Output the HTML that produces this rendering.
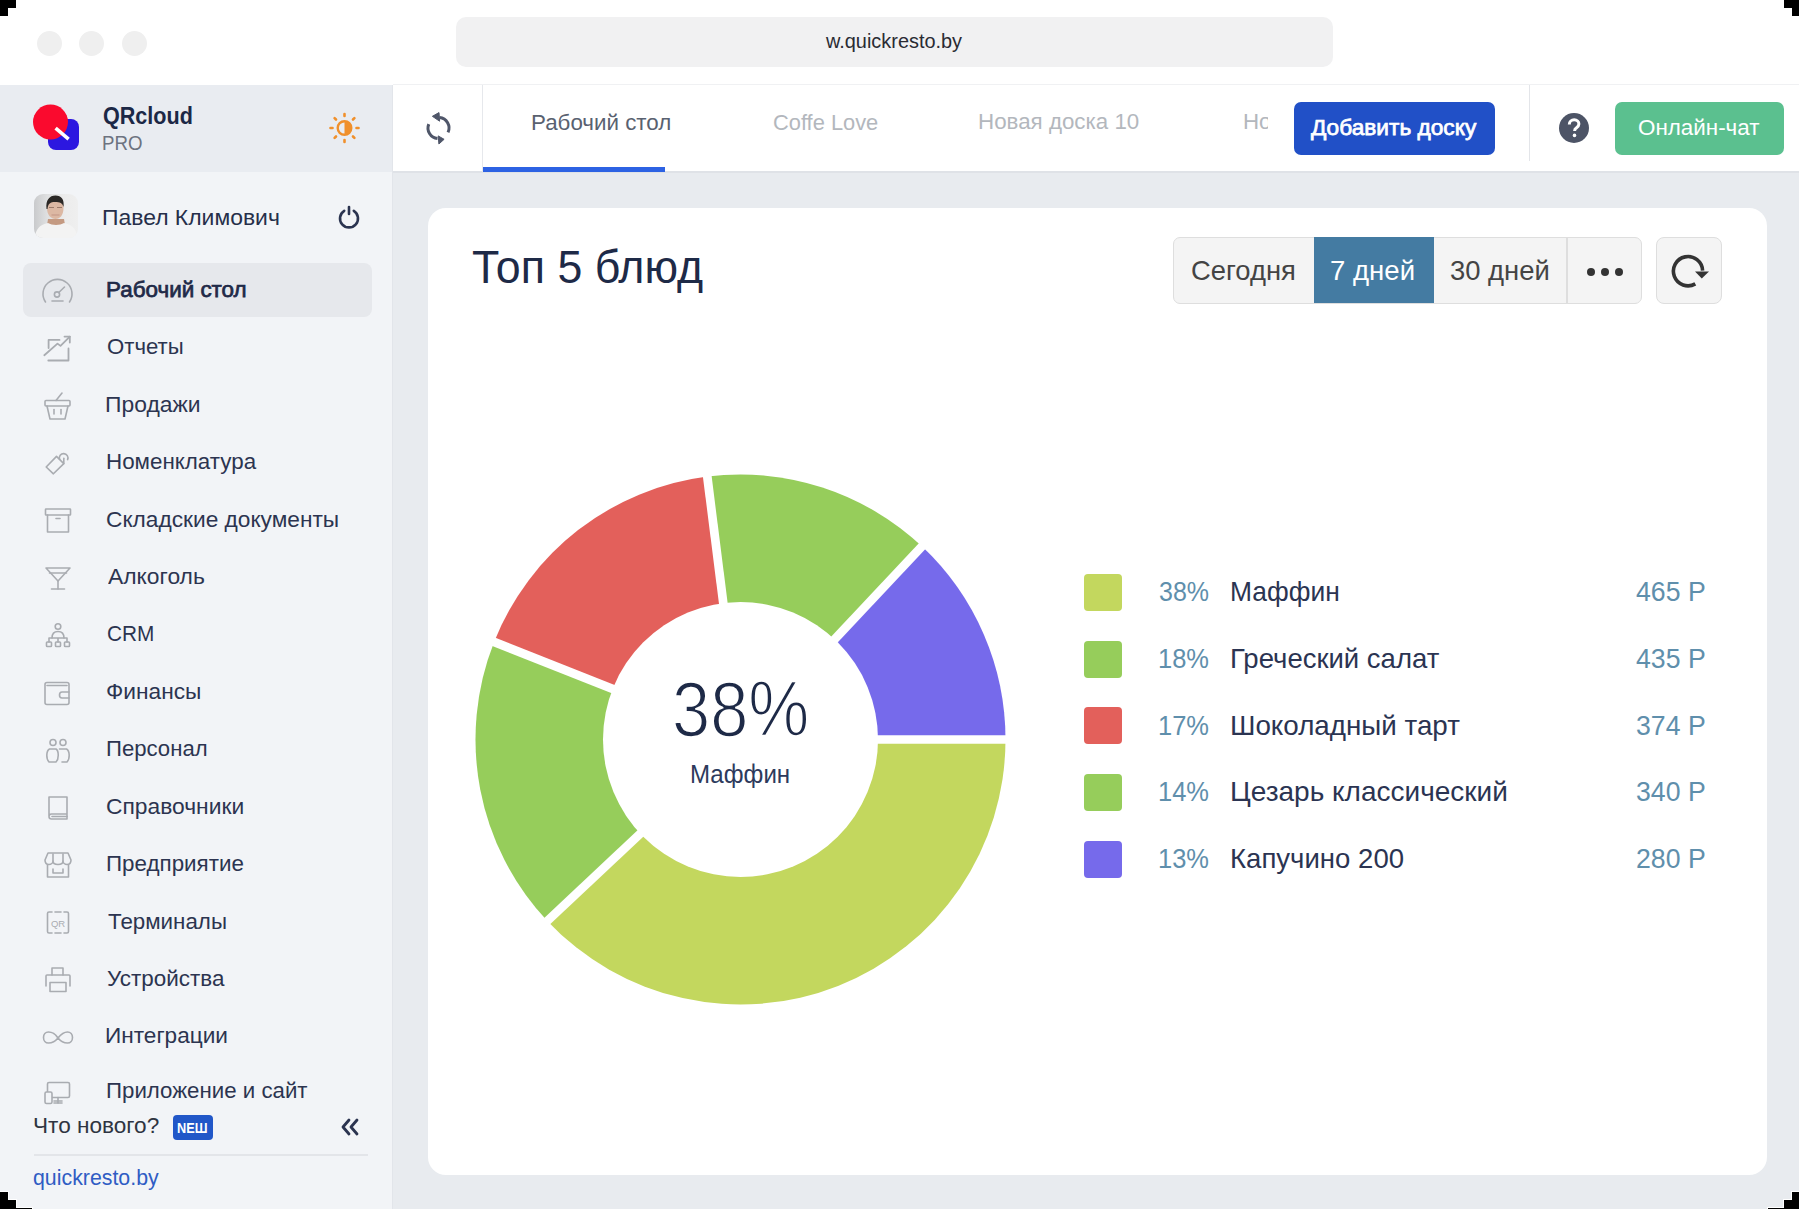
<!DOCTYPE html>
<html><head><meta charset="utf-8"><title>Quick Resto</title>
<style>
html,body{margin:0;padding:0;}
body{width:1799px;height:1209px;position:relative;overflow:hidden;background:#fff;font-family:"Liberation Sans",sans-serif;}
.r{position:absolute;}
.t{position:absolute;white-space:nowrap;line-height:1;transform-origin:0 0;}
</style></head><body>
<div class="r" style="left:36.5px;top:30.5px;width:25px;height:25px;border-radius:50%;background:#efefef"></div>
<div class="r" style="left:79.0px;top:30.5px;width:25px;height:25px;border-radius:50%;background:#efefef"></div>
<div class="r" style="left:121.5px;top:30.5px;width:25px;height:25px;border-radius:50%;background:#efefef"></div>
<div class="r" style="left:456px;top:17px;width:877px;height:50px;background:#f1f1f2;border-radius:10px;"></div>
<div class="r" style="left:0px;top:85px;width:392px;height:87px;background:#e9ecf1;border-radius:0px;"></div>
<div class="r" style="left:0px;top:172px;width:392px;height:1037px;background:#f2f4f7;border-radius:0px;"></div>
<div class="r" style="left:392px;top:85px;width:1px;height:1124px;background:#e2e5ea;border-radius:0px;"></div>
<svg class="r" style="left:30px;top:100px" width="54" height="54" viewBox="0 0 54 54">
<rect x="18" y="19" width="31" height="31" rx="8" fill="#2c17e0"/>
<circle cx="20.5" cy="22" r="17.5" fill="#fa0a2e"/>
<line x1="25.6" y1="28.2" x2="38.6" y2="39.2" stroke="#fff" stroke-width="3.6"/>
</svg>
<svg class="r" style="left:326px;top:110px" width="37" height="37" viewBox="0 0 37 37"><line x1="30.50" y1="18.00" x2="32.50" y2="18.00" stroke="#f0902c" stroke-width="2.6" stroke-linecap="round"/><line x1="26.99" y1="26.49" x2="28.40" y2="27.90" stroke="#f0902c" stroke-width="2.6" stroke-linecap="round"/><line x1="18.50" y1="30.00" x2="18.50" y2="32.00" stroke="#f0902c" stroke-width="2.6" stroke-linecap="round"/><line x1="10.01" y1="26.49" x2="8.60" y2="27.90" stroke="#f0902c" stroke-width="2.6" stroke-linecap="round"/><line x1="6.50" y1="18.00" x2="4.50" y2="18.00" stroke="#f0902c" stroke-width="2.6" stroke-linecap="round"/><line x1="10.01" y1="9.51" x2="8.60" y2="8.10" stroke="#f0902c" stroke-width="2.6" stroke-linecap="round"/><line x1="18.50" y1="6.00" x2="18.50" y2="4.00" stroke="#f0902c" stroke-width="2.6" stroke-linecap="round"/><line x1="26.99" y1="9.51" x2="28.40" y2="8.10" stroke="#f0902c" stroke-width="2.6" stroke-linecap="round"/><circle cx="18.5" cy="18" r="6.8" fill="none" stroke="#f0902c" stroke-width="2.4"/><path d="M18.5 11.2 A6.8 6.8 0 0 1 18.5 24.8 Z" fill="#f0902c"/></svg>
<div class="r" style="left:34px;top:194px;width:44px;height:44px;border-radius:9px;overflow:hidden;background:linear-gradient(90deg,#c9cacc 0%,#dfe0e1 30%,#ececec 70%,#efefef 100%)">
<svg width="44" height="44" viewBox="0 0 44 44" style="position:absolute;left:0;top:0">
<path d="M14 25 L30 25 L31 31 L13 31 Z" fill="#c49a82"/>
<path d="M13 14 C13 7 16.5 3.5 21.5 3.5 C26.5 3.5 29.5 7 29.5 14 C29.5 21 26 25 21.5 25 C17 25 13 21 13 14 Z" fill="#dcb8a3"/>
<path d="M12.5 15 C11.5 6 15.5 1.5 21.5 1.5 C27.5 1.5 30.5 5.5 29.5 13 C28.5 9 26 8 21 8 C16.5 8 14 9.5 13.5 15 Z" fill="#2b2826"/>
<path d="M15 13.5 L20 13.5 M23 13.5 L28 13.5" stroke="#9b7a6a" stroke-width="1"/>
<path d="M17.5 21 L25.5 21" stroke="#c29585" stroke-width="1"/>
<path d="M1 44 C1.5 35 6 30.5 14 29 C18 31.5 26 31.5 30 29 C38 30.5 43 35 43.5 44 Z" fill="#f3f3f3"/>
</svg></div>
<svg class="r" style="left:336px;top:204px" width="26" height="26" viewBox="0 0 26 26">
<path d="M8.2 6.8 A9 9 0 1 0 17.8 6.8" fill="none" stroke="#2b3450" stroke-width="2.6" stroke-linecap="round"/>
<line x1="13" y1="3" x2="13" y2="10" stroke="#2b3450" stroke-width="2.6" stroke-linecap="round"/></svg>
<div class="r" style="left:23px;top:263px;width:349px;height:54px;background:#e6e8ec;border-radius:8px;"></div>
<svg class="r" style="left:40px;top:276px" width="36" height="30" viewBox="0 0 36 30" fill="none" stroke="#a9acb1" stroke-width="1.6" stroke-linecap="round" stroke-linejoin="round"><path d="M5.5 26 A14.5 14.5 0 1 1 29.5 26"/><circle cx="17" cy="18.5" r="2.6"/><line x1="18.8" y1="16.5" x2="24.5" y2="11"/><line x1="12" y1="25" x2="23" y2="25"/></svg>
<svg class="r" style="left:40px;top:332px" width="36" height="34" viewBox="0 0 36 34" fill="none" stroke="#a9acb1" stroke-width="1.8" stroke-linecap="round" stroke-linejoin="round"><path d="M4.3 23.2 L17.5 11.6 L20.5 13.9 L29.8 4.6"/><path d="M24.5 4.6 L29.8 4.6 L29.8 10.6"/><path d="M8.6 16 L8.6 7.9 L19.5 7.9"/><path d="M8.3 28.5 L28.5 28.5 L28.5 16.5"/></svg>
<svg class="r" style="left:40px;top:388px" width="36" height="36" viewBox="0 0 36 36" fill="none" stroke="#a9acb1" stroke-width="1.6" stroke-linecap="round" stroke-linejoin="round"><line x1="16" y1="12.5" x2="22" y2="5"/><rect x="5" y="12.5" width="25" height="5.5" rx="1"/><path d="M7 18 L10 31 L25 31 L28 18"/><line x1="14" y1="21.5" x2="14" y2="26"/><line x1="21" y1="21.5" x2="21" y2="26"/></svg>
<svg class="r" style="left:40px;top:446px" width="36" height="36" viewBox="0 0 36 36" fill="none" stroke="#a9acb1" stroke-width="1.6" stroke-linecap="round" stroke-linejoin="round"><path d="M16.5 10.4 L23.8 17.6 L13.4 27.8 L6.2 21 Z"/><path d="M19.6 13.3 A4.3 4.3 0 1 1 27.6 13.6"/><path d="M23.8 12.2 L23.8 17.6"/></svg>
<svg class="r" style="left:40px;top:504px" width="36" height="36" viewBox="0 0 36 36" fill="none" stroke="#a9acb1" stroke-width="1.6" stroke-linecap="round" stroke-linejoin="round"><rect x="5.5" y="5" width="25" height="6" rx=".5"/><path d="M7.5 11 L7.5 28 L28.5 28 L28.5 11"/><line x1="16" y1="14.5" x2="20" y2="14.5"/></svg>
<svg class="r" style="left:40px;top:562px" width="36" height="36" viewBox="0 0 36 36" fill="none" stroke="#a9acb1" stroke-width="1.6" stroke-linecap="round" stroke-linejoin="round"><path d="M6 6 L30 6 L18 19 Z"/><line x1="9.5" y1="11" x2="26.5" y2="11"/><line x1="18" y1="19" x2="18" y2="27"/><line x1="11.5" y1="27" x2="24.5" y2="27"/></svg>
<svg class="r" style="left:40px;top:619px" width="36" height="36" viewBox="0 0 36 36" fill="none" stroke="#a9acb1" stroke-width="1.6" stroke-linecap="round" stroke-linejoin="round"><circle cx="18" cy="7.5" r="2.8"/><path d="M12 19 C12 14 14 12.5 18 12.5 C22 12.5 24 14 24 19"/><path d="M9 23 L9 19 L27 19 L27 23 M18 19 L18 23"/><rect x="6.5" y="23" width="5" height="4.5" rx=".8"/><rect x="15.5" y="23" width="5" height="4.5" rx=".8"/><rect x="24.5" y="23" width="5" height="4.5" rx=".8"/></svg>
<svg class="r" style="left:40px;top:676px" width="36" height="36" viewBox="0 0 36 36" fill="none" stroke="#a9acb1" stroke-width="1.6" stroke-linecap="round" stroke-linejoin="round"><rect x="5" y="6.5" width="24" height="22" rx="2"/><line x1="7" y1="9.5" x2="27" y2="9.5"/><path d="M29 16 L22 16 C20 16 19.5 17.5 19.5 19 C19.5 20.5 20 22 22 22 L29 22"/></svg>
<svg class="r" style="left:40px;top:734px" width="36" height="36" viewBox="0 0 36 36" fill="none" stroke="#a9acb1" stroke-width="1.6" stroke-linecap="round" stroke-linejoin="round"><circle cx="13" cy="8.5" r="3"/><circle cx="23" cy="8.5" r="3"/><path d="M9 28 C6 25 6 17 9.5 15 L16 15 C19 17 19 25 16 28 Z"/><path d="M19.5 15 L26.5 15 C30 17 30 25 27 28 L22 28"/></svg>
<svg class="r" style="left:40px;top:791px" width="36" height="36" viewBox="0 0 36 36" fill="none" stroke="#a9acb1" stroke-width="1.6" stroke-linecap="round" stroke-linejoin="round"><path d="M9 25 L9 6 L27 6 L27 28 L11.5 28 C10 28 9 27 9 25.5 C9 24 10 23 11.5 23 L27 23"/><line x1="12" y1="25.5" x2="27" y2="25.5"/></svg>
<svg class="r" style="left:40px;top:849px" width="36" height="36" viewBox="0 0 36 36" fill="none" stroke="#a9acb1" stroke-width="1.6" stroke-linecap="round" stroke-linejoin="round"><path d="M8 4 L28 4 L31 11 C31 14 29 15.5 27 15.5 C25 15.5 23 14 23 12 C23 14 21 15.5 18 15.5 C15 15.5 13 14 13 12 C13 14 11 15.5 9 15.5 C7 15.5 5 14 5 11 Z"/><line x1="13" y1="5" x2="13" y2="12"/><line x1="23" y1="5" x2="23" y2="12"/><path d="M7.5 16 L7.5 28 L28.5 28 L28.5 16"/><path d="M13 20 L13 24 L23 24 L23 20"/></svg>
<svg class="r" style="left:40px;top:906px" width="36" height="36" viewBox="0 0 36 36" fill="none" stroke="#a9acb1" stroke-width="1.6" stroke-linecap="round" stroke-linejoin="round"><path d="M12 6 L9 6 C8 6 7.5 6.5 7.5 7.5 L7.5 25.5 C7.5 26.5 8 27 9 27 L12 27"/><path d="M24 6 L27 6 C28 6 28.5 6.5 28.5 7.5 L28.5 25.5 C28.5 26.5 28 27 27 27 L24 27"/><line x1="15" y1="6" x2="21" y2="6"/><line x1="15" y1="27" x2="21" y2="27"/><text x="18" y="21" font-size="9.5" text-anchor="middle" fill="#a9acb1" stroke="none" font-family="Liberation Sans">QR</text></svg>
<svg class="r" style="left:40px;top:963px" width="36" height="36" viewBox="0 0 36 36" fill="none" stroke="#a9acb1" stroke-width="1.6" stroke-linecap="round" stroke-linejoin="round"><path d="M12 12 L12 5 L23 5 L23 12"/><path d="M6 23 L6 13 C6 12.5 6.5 12 7 12 L29 12 C29.5 12 30 12.5 30 13 L30 23"/><rect x="10" y="19.5" width="16" height="9"/></svg>
<svg class="r" style="left:40px;top:1020px" width="36" height="36" viewBox="0 0 36 36" fill="none" stroke="#a9acb1" stroke-width="1.6" stroke-linecap="round" stroke-linejoin="round"><path d="M18 18 C14 12 11 12 8.5 12 C5.5 12 3.5 14.5 3.5 17.5 C3.5 20.5 5.5 23 8.5 23 C11 23 14 23 18 18 C22 13 25 12 27.5 12 C30.5 12 32.5 14.5 32.5 17.5 C32.5 20.5 30.5 23 27.5 23 C25 23 22 23 18 18 Z"/></svg>
<svg class="r" style="left:40px;top:1076px" width="36" height="36" viewBox="0 0 36 36" fill="none" stroke="#a9acb1" stroke-width="1.6" stroke-linecap="round" stroke-linejoin="round"><rect x="7.5" y="6.5" width="22" height="15" rx="1.5"/><rect x="5" y="16" width="7" height="11.5" rx="1.5" fill="#f2f4f7"/><line x1="14" y1="25" x2="22" y2="25"/><line x1="18" y1="21.5" x2="18" y2="27"/><line x1="14" y1="27" x2="22" y2="27"/></svg>
<div class="r" style="left:172.5px;top:1115px;width:40.5px;height:24.5px;background:#2157c8;border-radius:4px;"></div>
<svg class="r" style="left:338px;top:1116px" width="24" height="22" viewBox="0 0 24 22" fill="none" stroke="#2b3450" stroke-width="2.8" stroke-linecap="round" stroke-linejoin="round">
<path d="M11 4 L5 11 L11 18"/><path d="M19 4 L13 11 L19 18"/></svg>
<div class="r" style="left:34px;top:1154px;width:334px;height:1.599999999999909px;background:#e3e5e9;border-radius:0px;"></div>
<div class="r" style="left:393px;top:85px;width:1406px;height:87px;background:#ffffff;border-radius:0px;"></div>
<div class="r" style="left:393px;top:84px;width:1406px;height:1px;background:#f0f1f3;border-radius:0px;"></div>
<div class="r" style="left:393px;top:171px;width:1406px;height:2px;background:#dfe2e7;border-radius:0px;"></div>
<div class="r" style="left:482px;top:85px;width:1px;height:87px;background:#e6e8ec;border-radius:0px;"></div>
<div class="r" style="left:483px;top:167px;width:182px;height:5px;background:#2d62e3;border-radius:0px;"></div>
<div class="r" style="left:1528.5px;top:85px;width:1.0px;height:76px;background:#e3e5e9;border-radius:0px;"></div>
<svg class="r" style="left:422px;top:110px" width="34" height="38" viewBox="0 0 34 38" fill="none" stroke="#4f5669" stroke-width="3" stroke-linecap="butt">
<path d="M26.02 22.44 A10.5 10.5 0 0 0 17.5 7.55"/><path d="M6.76 14.07 A10.5 10.5 0 0 0 15.5 28.45"/>
<path d="M10.4 6.3 L17 2.6 L17.6 11.2 Z" fill="#4f5669" stroke-width="1" stroke-linejoin="round"/>
<path d="M22.1 29.3 L16.2 25.9 L16.9 34 Z" fill="#4f5669" stroke-width="1" stroke-linejoin="round"/></svg>
<div class="r" style="left:1294px;top:101.5px;width:200.5px;height:53.5px;background:#2150c7;border-radius:7px;"></div>
<div class="r" style="left:1614.5px;top:101.5px;width:169.0px;height:53.5px;background:#5bc08f;border-radius:7px;"></div>
<svg class="r" style="left:1559px;top:113px" width="30" height="30" viewBox="0 0 30 30"><circle cx="15" cy="15" r="15" fill="#4d5466"/>
<path d="M10.3 11.5 C10.3 8.5 12.5 6.8 15.2 6.8 C18 6.8 19.9 8.6 19.9 11 C19.9 13.2 18.5 14.1 17.2 15 C16 15.8 15.6 16.4 15.6 18" fill="none" stroke="#fff" stroke-width="3"/><circle cx="15.5" cy="22.4" r="1.8" fill="#fff"/></svg>
<div class="r" style="left:393px;top:173px;width:1406px;height:1036px;background:#e8ebef;border-radius:0px;"></div>
<div class="r" style="left:427.5px;top:207.5px;width:1339.0px;height:967.0px;background:#ffffff;border-radius:18px;"></div>
<div class="r" style="left:1172.5px;top:237px;width:469.5px;height:66.5px;background:#f4f4f4;border-radius:7px;border:1.5px solid #dedede;box-sizing:border-box"></div>
<div class="r" style="left:1313.7px;top:236.7px;width:120.29999999999995px;height:66.80000000000001px;background:#447ba2;border-radius:0px;"></div>
<div class="r" style="left:1566.3px;top:238px;width:1.400000000000091px;height:64.5px;background:#dedede;border-radius:0px;"></div>
<div class="r" style="left:1586.9px;top:267.9px;width:8.2px;height:8.2px;border-radius:50%;background:#333"></div>
<div class="r" style="left:1600.9px;top:267.9px;width:8.2px;height:8.2px;border-radius:50%;background:#333"></div>
<div class="r" style="left:1614.9px;top:267.9px;width:8.2px;height:8.2px;border-radius:50%;background:#333"></div>
<div class="r" style="left:1656px;top:237px;width:66px;height:66.5px;background:#f4f4f4;border-radius:8px;border:1.5px solid #dedede;box-sizing:border-box"></div>
<svg class="r" style="left:1665px;top:247px" width="48" height="48" viewBox="0 0 48 48" fill="none">
<path d="M30.3 36.84 A14.6 14.6 0 1 1 37.6 23.6" stroke="#333" stroke-width="3.6" stroke-linecap="butt"/>
<path d="M30 24.4 L44 24.4 L36.8 31.4 Z" fill="#333"/></svg>
<svg class="r" style="left:0;top:0" width="1799" height="1209" viewBox="0 0 1799 1209"><path d="M740.5 739.5 L1005.50 739.50 A265 265 0 0 1 547.32 920.90 Z" fill="#c3d75e"/><path d="M740.5 739.5 L547.32 920.90 A265 265 0 0 1 494.11 641.95 Z" fill="#96cd5b"/><path d="M740.5 739.5 L494.11 641.95 A265 265 0 0 1 707.29 476.59 Z" fill="#e3605b"/><path d="M740.5 739.5 L707.29 476.59 A265 265 0 0 1 921.90 546.32 Z" fill="#96cd5b"/><path d="M740.5 739.5 L921.90 546.32 A265 265 0 0 1 1005.50 739.50 Z" fill="#766aeb"/><line x1="740.5" y1="739.5" x2="1010.50" y2="739.50" stroke="#fff" stroke-width="8.7"/><line x1="740.5" y1="739.5" x2="543.68" y2="924.33" stroke="#fff" stroke-width="8.7"/><line x1="740.5" y1="739.5" x2="489.46" y2="640.11" stroke="#fff" stroke-width="8.7"/><line x1="740.5" y1="739.5" x2="706.66" y2="471.63" stroke="#fff" stroke-width="8.7"/><line x1="740.5" y1="739.5" x2="925.33" y2="542.68" stroke="#fff" stroke-width="8.7"/><circle cx="740.5" cy="739.5" r="137.5" fill="#fff"/></svg>
<div class="r" style="left:1084.3px;top:574.0px;width:37.5px;height:37.0px;background:#c3d75e;border-radius:4px;"></div>
<div class="r" style="left:1084.3px;top:640.7px;width:37.5px;height:37.0px;background:#96cd5b;border-radius:4px;"></div>
<div class="r" style="left:1084.3px;top:707.4px;width:37.5px;height:37.0px;background:#e3605b;border-radius:4px;"></div>
<div class="r" style="left:1084.3px;top:774.1px;width:37.5px;height:37.0px;background:#96cd5b;border-radius:4px;"></div>
<div class="r" style="left:1084.3px;top:840.8px;width:37.5px;height:37.0px;background:#766aeb;border-radius:4px;"></div>
<div class="t" id="url" style="left:825.50px;top:31.00px;font-size:20px;font-weight:400;color:#2a2b33;transform:scaleX(0.9949);">w.quickresto.by</div>
<div class="t" id="qr" style="left:103.12px;top:103.97px;font-size:24.5px;font-weight:700;color:#1c2846;transform:scaleX(0.8800);">QRcloud</div>
<div class="t" id="pro" style="left:102.16px;top:132.55px;font-size:20.3px;font-weight:400;color:#6d7380;transform:scaleX(0.9195);">PRO</div>
<div class="t" id="user" style="left:101.92px;top:206.50px;font-size:22px;font-weight:400;color:#262f4a;transform:scaleX(1.0419);">Павел Климович</div>
<div class="t" id="m0" style="left:106.41px;top:278.88px;font-size:22.5px;font-weight:400;color:#1f2a48;transform:scaleX(0.9957);-webkit-text-stroke:.75px #1f2a48;">Рабочий стол</div>
<div class="t" id="m1" style="left:106.51px;top:336.31px;font-size:22.5px;font-weight:400;color:#2c3450;transform:scaleX(0.9853);">Отчеты</div>
<div class="t" id="m2" style="left:105.47px;top:393.74px;font-size:22.5px;font-weight:400;color:#2c3450;transform:scaleX(1.0165);">Продажи</div>
<div class="t" id="m3" style="left:105.51px;top:451.17px;font-size:22.5px;font-weight:400;color:#2c3450;transform:scaleX(0.9940);">Номенклатура</div>
<div class="t" id="m4" style="left:106.49px;top:508.59px;font-size:22.5px;font-weight:400;color:#2c3450;transform:scaleX(1.0087);">Складские документы</div>
<div class="t" id="m5" style="left:107.50px;top:566.02px;font-size:22.5px;font-weight:400;color:#2c3450;transform:scaleX(1.0160);">Алкоголь</div>
<div class="t" id="m6" style="left:106.58px;top:623.45px;font-size:22.5px;font-weight:400;color:#2c3450;transform:scaleX(0.9245);">CRM</div>
<div class="t" id="m7" style="left:106.49px;top:680.88px;font-size:22.5px;font-weight:400;color:#2c3450;transform:scaleX(1.0098);">Финансы</div>
<div class="t" id="m8" style="left:105.53px;top:738.31px;font-size:22.5px;font-weight:400;color:#2c3450;transform:scaleX(0.9840);">Персонал</div>
<div class="t" id="m9" style="left:106.49px;top:795.74px;font-size:22.5px;font-weight:400;color:#2c3450;transform:scaleX(1.0134);">Справочники</div>
<div class="t" id="m10" style="left:105.51px;top:853.17px;font-size:22.5px;font-weight:400;color:#2c3450;transform:scaleX(0.9941);">Предприятие</div>
<div class="t" id="m11" style="left:107.50px;top:910.61px;font-size:22.5px;font-weight:400;color:#2c3450;transform:scaleX(0.9932);">Терминалы</div>
<div class="t" id="m12" style="left:106.50px;top:968.03px;font-size:22.5px;font-weight:400;color:#2c3450;transform:scaleX(0.9974);">Устройства</div>
<div class="t" id="m13" style="left:105.49px;top:1025.46px;font-size:22.5px;font-weight:400;color:#2c3450;transform:scaleX(1.0042);">Интеграции</div>
<div class="t" id="m14" style="left:105.72px;top:1079.97px;font-size:22.5px;font-weight:400;color:#2c3450;transform:scaleX(0.9896);">Приложение и сайт</div>
<div class="t" id="whatsnew" style="left:33.15px;top:1115.10px;font-size:22px;font-weight:400;color:#2f3441;transform:scaleX(1.0267);">Что нового?</div>
<div class="t" id="new" style="left:177.22px;top:1121.47px;font-size:14.5px;font-weight:700;color:#ffffff;transform:scaleX(0.8788);">NEШ</div>
<div class="t" id="site" style="left:32.73px;top:1167.40px;font-size:22px;font-weight:400;color:#2f5cc4;transform:scaleX(0.9698);">quickresto.by</div>
<div class="t" id="tab0" style="left:531.21px;top:111.87px;font-size:22.5px;font-weight:400;color:#596170;transform:scaleX(0.9935);">Рабочий стол</div>
<div class="t" id="tab1" style="left:772.73px;top:111.67px;font-size:22.5px;font-weight:400;color:#b3b7bd;transform:scaleX(0.9710);">Coffe Love</div>
<div class="t" id="tab2" style="left:978.41px;top:111.37px;font-size:22.5px;font-weight:400;color:#b3b7bd;transform:scaleX(0.9925);">Новая доска 10</div>
<div class="t" id="btn1" style="left:1311.10px;top:117.27px;font-size:22.5px;font-weight:400;color:#ffffff;transform:scaleX(1.0079);-webkit-text-stroke:.75px #fff;">Добавить доску</div>
<div class="t" id="btn2" style="left:1637.60px;top:116.98px;font-size:22.5px;font-weight:400;color:#ffffff;transform:scaleX(0.9950);">Онлайн-чат</div>
<div class="t" id="title" style="left:471.52px;top:245.43px;font-size:45.5px;font-weight:400;color:#1e2a47;transform:scaleX(0.9837);">Топ 5 блюд</div>
<div class="t" id="seg0" style="left:1190.70px;top:256.62px;font-size:27.5px;font-weight:400;color:#444444;transform:scaleX(0.9951);">Сегодня</div>
<div class="t" id="seg1" style="left:1329.80px;top:256.62px;font-size:27.5px;font-weight:400;color:#ffffff;transform:scaleX(1.0024);">7 дней</div>
<div class="t" id="seg2" style="left:1450.00px;top:256.73px;font-size:27.5px;font-weight:400;color:#444444;transform:scaleX(0.9969);">30 дней</div>
<div class="t" id="big" style="left:672.35px;top:671.42px;font-size:77.5px;font-weight:400;color:#1e2a47;transform:scaleX(0.8846);-webkit-text-stroke:1.7px #fff;">38%</div>
<div class="t" id="bigsub" style="left:690.45px;top:761.10px;font-size:26px;font-weight:400;color:#2d3a5c;transform:scaleX(0.9267);">Маффин</div>
<div class="t" id="lp0" style="left:1159.09px;top:578.22px;font-size:27.5px;font-weight:400;color:#5f8fac;transform:scaleX(0.9094);">38%</div>
<div class="t" id="ln0" style="left:1229.98px;top:578.22px;font-size:27.5px;font-weight:400;color:#2b3452;transform:scaleX(0.9604);">Маффин</div>
<div class="t" id="lr0" style="left:1635.73px;top:578.22px;font-size:27.5px;font-weight:400;color:#5f8fac;transform:scaleX(0.9700);">465 Р</div>
<div class="t" id="lp1" style="left:1158.15px;top:644.92px;font-size:27.5px;font-weight:400;color:#5f8fac;transform:scaleX(0.9269);">18%</div>
<div class="t" id="ln1" style="left:1229.90px;top:644.92px;font-size:27.5px;font-weight:400;color:#2b3452;transform:scaleX(1.0005);">Греческий салат</div>
<div class="t" id="lr1" style="left:1635.73px;top:644.92px;font-size:27.5px;font-weight:400;color:#5f8fac;transform:scaleX(0.9700);">435 Р</div>
<div class="t" id="lp2" style="left:1158.15px;top:711.62px;font-size:27.5px;font-weight:400;color:#5f8fac;transform:scaleX(0.9269);">17%</div>
<div class="t" id="ln2" style="left:1229.88px;top:711.62px;font-size:27.5px;font-weight:400;color:#2b3452;transform:scaleX(1.0093);">Шоколадный тарт</div>
<div class="t" id="lr2" style="left:1635.73px;top:711.62px;font-size:27.5px;font-weight:400;color:#5f8fac;transform:scaleX(0.9700);">374 Р</div>
<div class="t" id="lp3" style="left:1158.15px;top:778.32px;font-size:27.5px;font-weight:400;color:#5f8fac;transform:scaleX(0.9269);">14%</div>
<div class="t" id="ln3" style="left:1229.86px;top:778.32px;font-size:27.5px;font-weight:400;color:#2b3452;transform:scaleX(1.0182);">Цезарь классический</div>
<div class="t" id="lr3" style="left:1635.73px;top:778.32px;font-size:27.5px;font-weight:400;color:#5f8fac;transform:scaleX(0.9700);">340 Р</div>
<div class="t" id="lp4" style="left:1158.15px;top:845.02px;font-size:27.5px;font-weight:400;color:#5f8fac;transform:scaleX(0.9269);">13%</div>
<div class="t" id="ln4" style="left:1229.90px;top:845.02px;font-size:27.5px;font-weight:400;color:#2b3452;transform:scaleX(1.0023);">Капучино 200</div>
<div class="t" id="lr4" style="left:1635.73px;top:845.02px;font-size:27.5px;font-weight:400;color:#5f8fac;transform:scaleX(0.9700);">280 Р</div>
<div class="r" style="left:1238px;top:100px;width:30px;height:50px;overflow:hidden"><div class="t" style="left:4.5px;top:10.6px;font-size:22.5px;color:#b3b7bd;transform:scaleX(.99)">Новая</div></div>
<div class="r" style="left:0px;top:0px;width:16px;height:8px;background:#000000;border-radius:0px;"></div>
<div class="r" style="left:0px;top:8px;width:8px;height:8px;background:#000000;border-radius:0px;"></div>
<div class="r" style="left:1784px;top:0px;width:15px;height:8px;background:#000000;border-radius:0px;"></div>
<div class="r" style="left:1792px;top:8px;width:7px;height:8px;background:#000000;border-radius:0px;"></div>
<div class="r" style="left:0px;top:1191px;width:9px;height:18px;background:#ffffff;border-radius:0px;"></div>
<div class="r" style="left:0px;top:1199px;width:17px;height:10px;background:#ffffff;border-radius:0px;"></div>
<div class="r" style="left:0px;top:1207px;width:33px;height:2px;background:#ffffff;border-radius:0px;"></div>
<div class="r" style="left:0px;top:1192px;width:8px;height:17px;background:#000000;border-radius:0px;"></div>
<div class="r" style="left:0px;top:1200px;width:16px;height:9px;background:#000000;border-radius:0px;"></div>
<div class="r" style="left:0px;top:1208px;width:32px;height:1px;background:#000000;border-radius:0px;"></div>
<div class="r" style="left:1791px;top:1191px;width:8px;height:18px;background:#ffffff;border-radius:0px;"></div>
<div class="r" style="left:1783px;top:1199px;width:16px;height:10px;background:#ffffff;border-radius:0px;"></div>
<div class="r" style="left:1767px;top:1207px;width:32px;height:2px;background:#ffffff;border-radius:0px;"></div>
<div class="r" style="left:1792px;top:1192px;width:7px;height:17px;background:#000000;border-radius:0px;"></div>
<div class="r" style="left:1784px;top:1200px;width:15px;height:9px;background:#000000;border-radius:0px;"></div>
<div class="r" style="left:1768px;top:1208px;width:31px;height:1px;background:#000000;border-radius:0px;"></div>
</body></html>
